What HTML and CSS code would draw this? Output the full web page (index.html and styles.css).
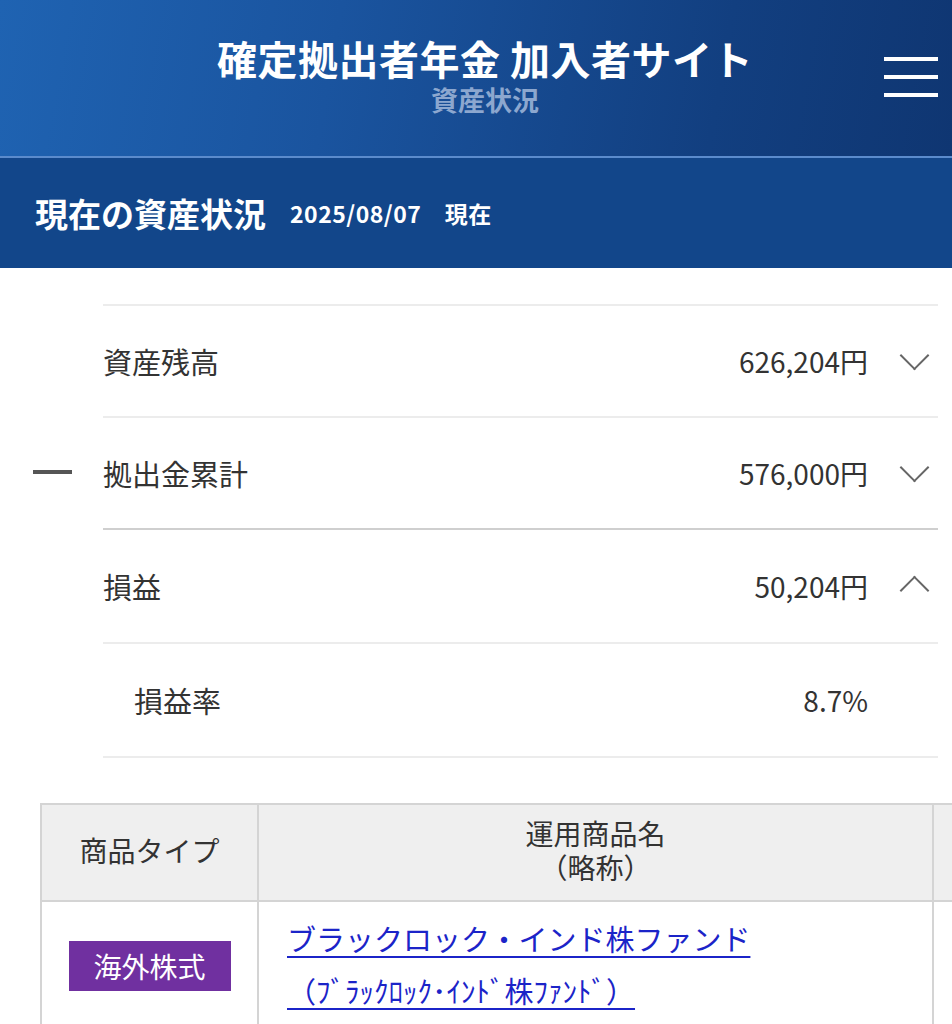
FILE: index.html
```html
<!DOCTYPE html>
<html lang="ja">
<head>
    <meta charset="UTF-8">
    <meta name="viewport" content="width=device-width, initial-scale=1.0">
    <title>資産状況 | 確定拠出者年金 加入者サイト</title>
    <link rel="stylesheet" href="styles.css">
</head>
<body>
    <header class="site-header">
        <div class="site-title">
            <h1>確定拠出者年金 加入者サイト</h1>
            <p class="page-name">資産状況</p>
        </div>
        <button class="menu-button" aria-label="メニュー">
            <span></span><span></span><span></span>
        </button>
    </header>

    <div class="section-bar">
        <h2>現在の資産状況</h2>
        <span class="as-of">2025/08/07　現在</span>
    </div>

    <ul class="summary">
        <li class="summary-row">
            <div class="mark"></div>
            <div class="row-body">
                <span class="label">資産残高</span>
                <span class="value">626,204円</span>
                <span class="toggle down"></span>
            </div>
        </li>
        <li class="summary-row">
            <div class="mark"><span class="minus"></span></div>
            <div class="row-body">
                <span class="label">拠出金累計</span>
                <span class="value">576,000円</span>
                <span class="toggle down"></span>
            </div>
        </li>
        <li class="summary-row total">
            <div class="mark"></div>
            <div class="row-body">
                <span class="label">損益</span>
                <span class="value">50,204円</span>
                <span class="toggle up"></span>
            </div>
        </li>
        <li class="summary-row sub last">
            <div class="mark"></div>
            <div class="row-body">
                <span class="label">損益率</span>
                <span class="value">8.7%</span>
                <span class="toggle"></span>
            </div>
        </li>
    </ul>

    <table class="fund-table">
        <thead>
            <tr>
                <th class="col-type">商品タイプ</th>
                <th class="col-name">運用商品名<br>（略称）</th>
                <th class="col-more"></th>
            </tr>
        </thead>
        <tbody>
            <tr>
                <td class="col-type"><span class="badge">海外株式</span></td>
                <td class="col-name">
                    <a href="#" class="fund-link">ブラックロック・インド株ファンド</a>
                    <a href="#" class="fund-link">（ﾌﾞﾗｯｸﾛｯｸ･ｲﾝﾄﾞ株ﾌｧﾝﾄﾞ）</a>
                </td>
                <td class="col-more"></td>
            </tr>
        </tbody>
    </table>
</body>
</html>
```

FILE: styles.css
```css
body {
    margin: 0;
    background-color: #fff;
    font-family: "Noto Sans CJK JP", "Noto Sans", sans-serif;
    color: #333;
    overflow-x: hidden;
}
.site-header {
    height: 156px;
    display: flex;
    align-items: center;
    justify-content: center;
    position: relative;
    background: linear-gradient(100deg, #1f63b2 0%, #1a549f 35%, #123f80 75%, #0f3672 100%);
    border-bottom: 2px solid #5b8bcc;
}
.site-title {
    text-align: center;
    padding-left: 18px;
    margin-top: -4px;
}
.site-title h1 {
    margin: 0;
    color: #fff;
    font-size: 40px;
    font-weight: bold;
    line-height: 44px;
    letter-spacing: 0.5px;
}
.page-name {
    margin: 4px 0 0;
    color: #8ca7cf;
    font-size: 27px;
    font-weight: bold;
    line-height: 32px;
}
.menu-button {
    position: absolute;
    right: 14px;
    top: 57px;
    width: 54px;
    height: 40px;
    padding: 0;
    border: none;
    background: none;
    display: flex;
    flex-direction: column;
    justify-content: space-between;
}
.menu-button span {
    display: block;
    height: 4px;
    background-color: #fff;
}
.section-bar {
    height: 110px;
    background-color: #12468a;
    display: flex;
    align-items: center;
    padding-left: 35px;
    color: #fff;
}
.section-bar h2 {
    margin: 0 24px 0 0;
    font-size: 33px;
    font-weight: bold;
}
.as-of {
    font-size: 23px;
    font-weight: bold;
    letter-spacing: 0.5px;
}
.summary {
    list-style: none;
    margin: 36px 14px 0 0;
    padding: 0;
}
.summary-row {
    display: flex;
}
.mark {
    width: 103px;
    display: flex;
    align-items: center;
}
.minus {
    display: block;
    width: 39px;
    height: 4px;
    margin-left: 33px;
    background-color: #555;
}
.row-body {
    flex: 1;
    height: 110px;
    display: flex;
    align-items: center;
    border-top: 2px solid #ececec;
    font-size: 28px;
}
.total .row-body,
.sub .row-body {
    height: 112px;
}
.total .row-body {
    border-top-color: #cfcfcf;
}
.last .row-body {
    border-bottom: 2px solid #ececec;
}
.label {
    font-size: 29px;
}
.sub .label {
    padding-left: 31px;
}
.value {
    margin-left: auto;
}
.toggle {
    width: 70px;
    height: 40px;
    position: relative;
}
.toggle.down::after,
.toggle.up::after {
    content: "";
    position: absolute;
    left: 36px;
    width: 19px;
    height: 19px;
    border-right: 2px solid #666;
    border-bottom: 2px solid #666;
}
.toggle.down::after {
    top: 4px;
    transform: rotate(45deg);
}
.toggle.up::after {
    top: 14px;
    transform: rotate(-135deg);
}
.fund-table {
    margin: 45px 0 0 40px;
    border-collapse: collapse;
    table-layout: fixed;
    width: 1100px;
    font-size: 28px;
}
.fund-table th,
.fund-table td {
    border: 2px solid #d4d4d4;
    padding: 0;
}
.fund-table th {
    height: 89px;
    padding-bottom: 6px;
    background-color: #efefef;
    font-weight: normal;
    line-height: 34px;
    color: #333;
}
.col-type {
    width: 215px;
    text-align: center;
}
.col-name {
    width: 673px;
}
.fund-table td {
    height: 124px;
    vertical-align: middle;
}
.fund-table td.col-name {
    padding: 0 28px 4px;
}
.badge {
    display: inline-block;
    width: 162px;
    line-height: 50px;
    background-color: #7030a0;
    color: #fff;
    font-size: 28px;
}
.fund-link {
    display: block;
    width: max-content;
    line-height: 52px;
    font-size: 29px;
    color: #1b24c8;
    text-decoration: underline;
    text-decoration-thickness: 2px;
    text-underline-offset: 5px;
}
```
